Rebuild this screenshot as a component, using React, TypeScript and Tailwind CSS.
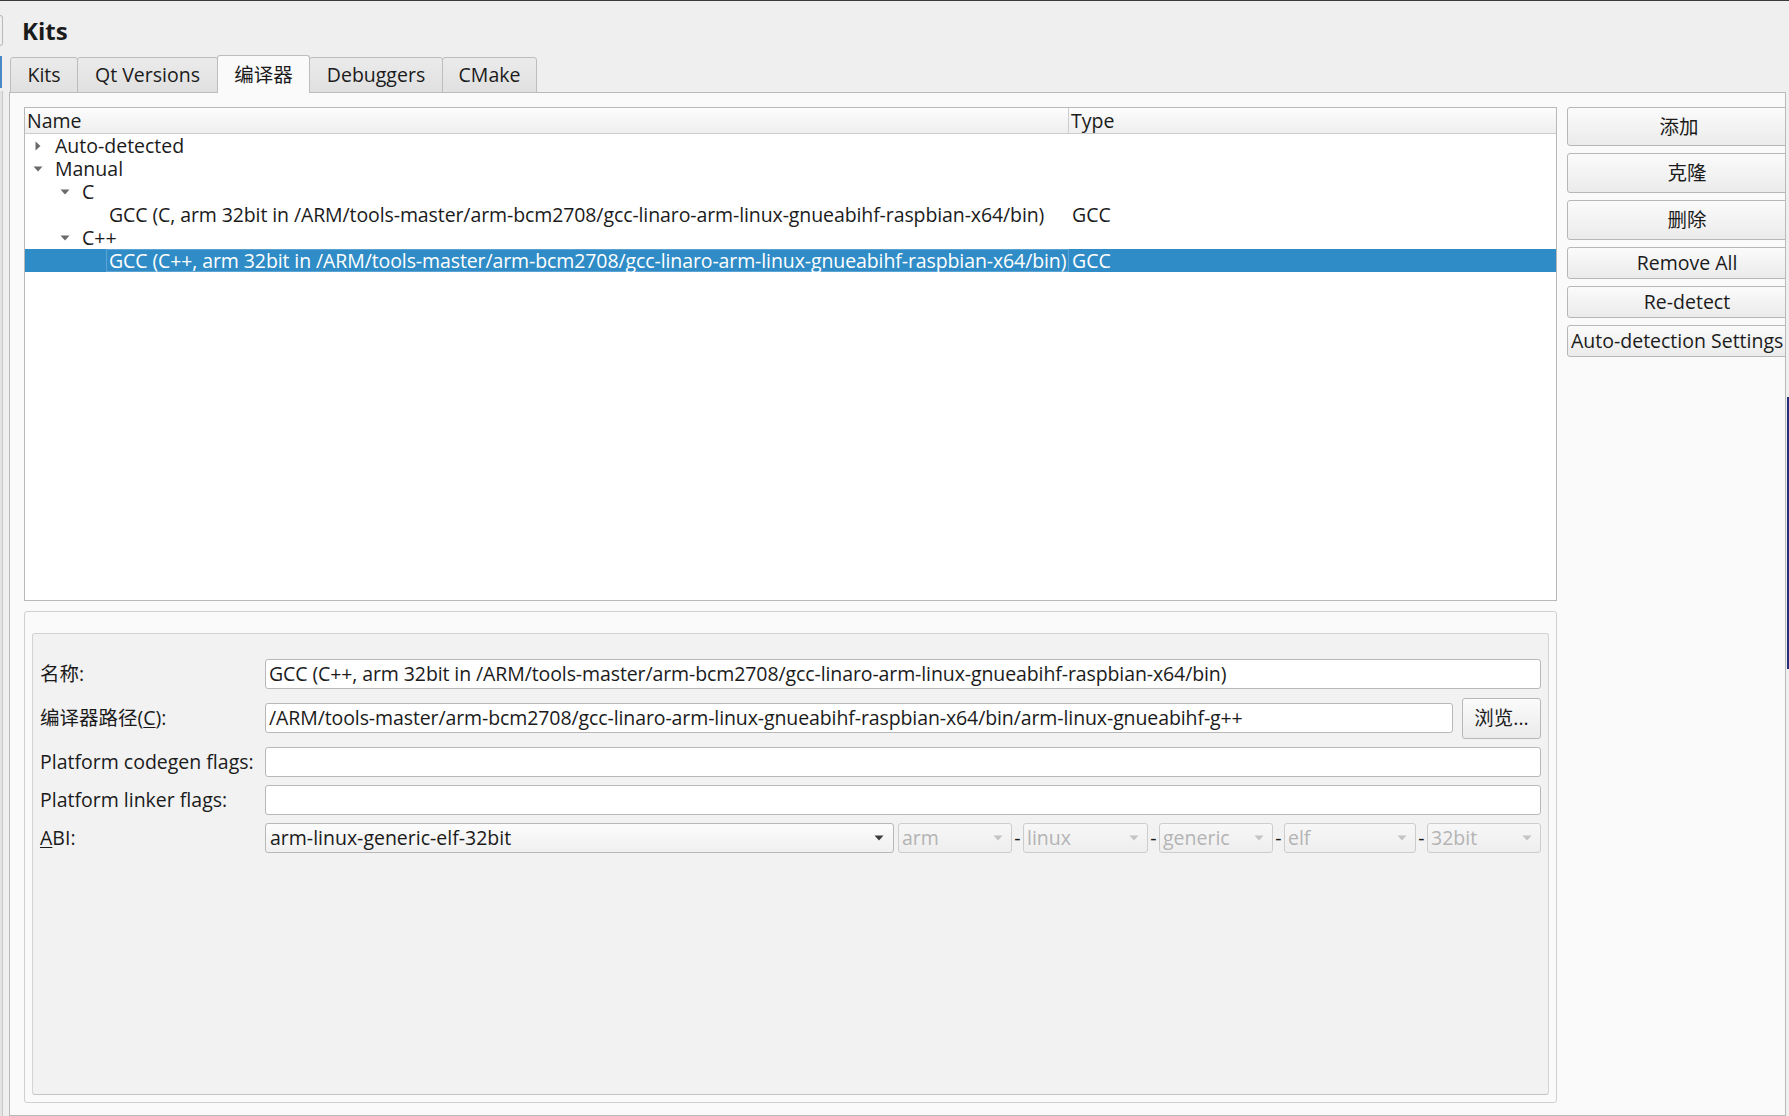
import React from "react";

function TriRight() {
  return (
    <svg width="6" height="10" viewBox="0 0 6 10">
      <path d="M0.5 0.5 L5.5 5 L0.5 9.5 Z" fill="#6a6a6a" />
    </svg>
  );
}

function TriDown({ color = "#6a6a6a" }: { color?: string }) {
  return (
    <svg width="10" height="6" viewBox="0 0 10 6">
      <path d="M0.5 0.5 H9.5 L5 5.5 Z" fill={color} />
    </svg>
  );
}

function Cjk({ children }: { children: React.ReactNode }) {
  return <span className="text-[19.5px]">{children}</span>;
}

type Row = {
  pad: string;
  arrow?: "right" | "down";
  name: string;
  type?: string;
  selected?: boolean;
  path?: boolean;
};

const rows: Row[] = [
  { pad: "pl-[7px]", arrow: "right", name: "Auto-detected" },
  { pad: "pl-[7px]", arrow: "down", name: "Manual" },
  { pad: "pl-[34px]", arrow: "down", name: "C" },
  {
    pad: "pl-[61px]",
    name: "GCC (C, arm 32bit in /ARM/tools-master/arm-bcm2708/gcc-linaro-arm-linux-gnueabihf-raspbian-x64/bin)",
    type: "GCC",
    path: true,
  },
  { pad: "pl-[34px]", arrow: "down", name: "C++" },
  {
    pad: "pl-[61px]",
    name: "GCC (C++, arm 32bit in /ARM/tools-master/arm-bcm2708/gcc-linaro-arm-linux-gnueabihf-raspbian-x64/bin)",
    type: "GCC",
    selected: true,
    path: true,
  },
];

function TreeRow({ r }: { r: Row }) {
  return (
    <div
      className={
        "h-[23px] flex items-stretch whitespace-nowrap leading-[20px] " +
        (r.selected ? "bg-[#308cc6] text-white" : "")
      }
    >
      <div className={"w-[1044px] shrink-0 flex items-center " + r.pad}>
        <div className="w-[12px] h-full flex items-center justify-center shrink-0">
          {r.arrow === "right" && <TriRight />}
          {r.arrow === "down" && <TriDown />}
        </div>
        <div
          className={
            "ml-[8px] flex-1 h-full flex items-center px-[2px] border " +
            (r.path ? "tracking-[-0.1px] " : "") +
            (r.selected ? "border-[#5aa3d3]" : "border-transparent")
          }
        >
          {r.name}
        </div>
      </div>
      <div className="flex-1 flex items-center pl-[3px]">{r.type ?? ""}</div>
    </div>
  );
}

function Tab({
  label,
  w,
  selected,
  first,
}: {
  label: React.ReactNode;
  w: string;
  selected?: boolean;
  first?: boolean;
}) {
  return (
    <div
      className={
        w +
        " shrink-0 flex items-center justify-center rounded-t-[3px] border-[#bdbdbd] whitespace-nowrap " +
        (first ? "" : "-ml-px ") +
        (selected
          ? "h-[38px] border-x border-t bg-[#fafafa] relative z-10"
          : "h-[36px] border bg-gradient-to-b from-[#ebebeb] to-[#e0e0e0]")
      }
    >
      {label}
    </div>
  );
}

function Btn({ label, h, extra = "justify-center" }: { label: React.ReactNode; h: string; extra?: string }) {
  return (
    <div
      className={
        h +
        " " +
        extra +
        " shrink-0 border border-[#b7b7b7] rounded-[3px] bg-gradient-to-b from-[#fbfbfb] to-[#ebebeb] flex items-center whitespace-nowrap"
      }
    >
      {label}
    </div>
  );
}

function Input({ value }: { value?: string }) {
  return (
    <div className="flex-1 h-[30px] border border-[#b8b8b8] rounded-[3px] bg-white px-[3px] flex items-center whitespace-nowrap overflow-hidden tracking-[-0.1px]">
      {value ?? ""}
    </div>
  );
}

function DisCombo({ label, w }: { label: string; w: string }) {
  return (
    <div
      className={
        w +
        " shrink-0 h-[30px] border border-[#cdcdcd] rounded-[3px] bg-gradient-to-b from-[#f7f7f7] to-[#eeeeee] flex items-center justify-between pl-[3px] pr-[8px] text-[#b4b4b4]"
      }
    >
      <span>{label}</span>
      <TriDown color="#c4c4c4" />
    </div>
  );
}

function Dash() {
  return <div className="w-[11px] shrink-0 flex items-center justify-center">-</div>;
}

export default function App() {
  return (
    <div className="w-[1789px] h-[1116px] overflow-hidden bg-[#efefef] border-t border-[#3a3a3a] flex text-[19.5px] leading-[22px] text-[#1b1b1b] font-[family-name:'Open_Sans','Noto_Sans_CJK_SC',sans-serif]">
      {/* left edge strip */}
      <div className="w-[9px] shrink-0 relative">
        <div className="absolute left-0 top-[14px] w-[3px] h-[31px] border-y border-r border-[#b9b9b9] rounded-r-[3px]" />
        <div className="absolute left-0 top-[55px] w-[2px] h-[32px] bg-[#4a88c8]" />
        <div className="absolute left-0 top-[90px] bottom-0 w-[3px] bg-[#e3e3e3] border-r border-[#c9c9c9]" />
      </div>

      {/* main column */}
      <div className="w-[1777px] shrink-0 flex flex-col">
        <div className="h-[54px] shrink-0 pl-[13px] pt-[6px] flex items-center text-[24px] font-bold">
          Kits
        </div>

        <div className="h-[38px] shrink-0 flex items-end pl-px relative z-10 -mb-px">
          <Tab label="Kits" w="w-[68px]" first />
          <Tab label="Qt Versions" w="w-[141px]" />
          <Tab label={<Cjk>编译器</Cjk>} w="w-[93px]" selected />
          <Tab label="Debuggers" w="w-[134px]" />
          <Tab label="CMake" w="w-[95px]" />
        </div>

        <div className="flex-1 min-h-0 border border-[#b9b9b9] bg-[#fafafa] flex pt-[14px] pl-[14px] pb-[12px] gap-[10px] overflow-hidden">
          <div className="w-[1533px] shrink-0 flex flex-col gap-[10px]">
            {/* tree */}
            <div className="h-[494px] shrink-0 border border-[#b8b8b8] bg-white flex flex-col overflow-hidden">
              <div className="h-[26px] shrink-0 flex border-b border-[#cdcdcd] bg-gradient-to-b from-[#fdfdfd] to-[#eeeeee] leading-[20px]">
                <div className="w-[1044px] shrink-0 pl-[2px] flex items-center border-r border-[#cdcdcd]">
                  Name
                </div>
                <div className="flex-1 pl-[2px] flex items-center">Type</div>
              </div>
              {rows.map((r, i) => (
                <TreeRow key={i} r={r} />
              ))}
            </div>

            {/* group boxes */}
            <div className="flex-1 min-h-0 border border-[#d0d0d0] rounded-[3px] bg-[#fafafa] pt-[21px] px-[7px] pb-[7px] flex flex-col">
              <div className="flex-1 border border-[#d3d3d3] border-b-[#c4c4c4] rounded-[3px] bg-[#f2f2f2] pt-[25px] px-[7px] flex flex-col gap-[8px]">
                <div className="h-[30px] flex items-center">
                  <div className="w-[225px] shrink-0"><Cjk>名称</Cjk>:</div>
                  <Input value="GCC (C++, arm 32bit in /ARM/tools-master/arm-bcm2708/gcc-linaro-arm-linux-gnueabihf-raspbian-x64/bin)" />
                </div>
                <div className="h-[42px] flex items-center">
                  <div className="w-[225px] shrink-0">
                    <Cjk>编译器路径</Cjk>(<span className="underline underline-offset-2">C</span>):
                  </div>
                  <Input value="/ARM/tools-master/arm-bcm2708/gcc-linaro-arm-linux-gnueabihf-raspbian-x64/bin/arm-linux-gnueabihf-g++" />
                  <div className="ml-[9px] w-[79px] h-[41px] shrink-0 border border-[#b7b7b7] rounded-[3px] bg-gradient-to-b from-[#fbfbfb] to-[#ebebeb] flex items-center justify-center whitespace-nowrap">
                    <Cjk>浏览</Cjk>...
                  </div>
                </div>
                <div className="h-[30px] flex items-center">
                  <div className="w-[225px] shrink-0 whitespace-nowrap">Platform codegen flags:</div>
                  <Input />
                </div>
                <div className="h-[30px] flex items-center">
                  <div className="w-[225px] shrink-0 whitespace-nowrap">Platform linker flags:</div>
                  <Input />
                </div>
                <div className="h-[30px] flex items-center">
                  <div className="w-[225px] shrink-0">
                    <span className="underline underline-offset-2">A</span>BI:
                  </div>
                  <div className="flex-1 h-[30px] border border-[#b8b8b8] rounded-[3px] bg-gradient-to-b from-[#fcfcfc] to-[#f0f0f0] flex items-center justify-between pl-[4px] pr-[9px] whitespace-nowrap">
                    <span>arm-linux-generic-elf-32bit</span>
                    <TriDown color="#3c3c3c" />
                  </div>
                  <div className="w-[4px] shrink-0" />
                  <DisCombo label="arm" w="w-[114px]" />
                  <Dash />
                  <DisCombo label="linux" w="w-[125px]" />
                  <Dash />
                  <DisCombo label="generic" w="w-[114px]" />
                  <Dash />
                  <DisCombo label="elf" w="w-[132px]" />
                  <Dash />
                  <DisCombo label="32bit" w="w-[114px]" />
                </div>
              </div>
            </div>
          </div>

          {/* buttons */}
          <div className="w-[240px] shrink-0 flex flex-col gap-[7px]">
            <Btn label={<Cjk>添加</Cjk>} h="h-[39px]" extra="justify-center pr-[16px]" />
            <Btn label={<Cjk>克隆</Cjk>} h="h-[40px]" />
            <Btn label={<Cjk>删除</Cjk>} h="h-[40px]" />
            <Btn label="Remove All" h="h-[32px]" />
            <Btn label="Re-detect" h="h-[32px]" />
            <Btn label="Auto-detection Settings" h="h-[32px]" extra="justify-start pl-[3px]" />
          </div>
        </div>
      </div>

      {/* right edge strip */}
      <div className="w-[3px] shrink-0 relative">
        <div className="absolute left-[1px] top-[396px] w-[2px] h-[272px] bg-[#22307a]" />
      </div>
    </div>
  );
}
